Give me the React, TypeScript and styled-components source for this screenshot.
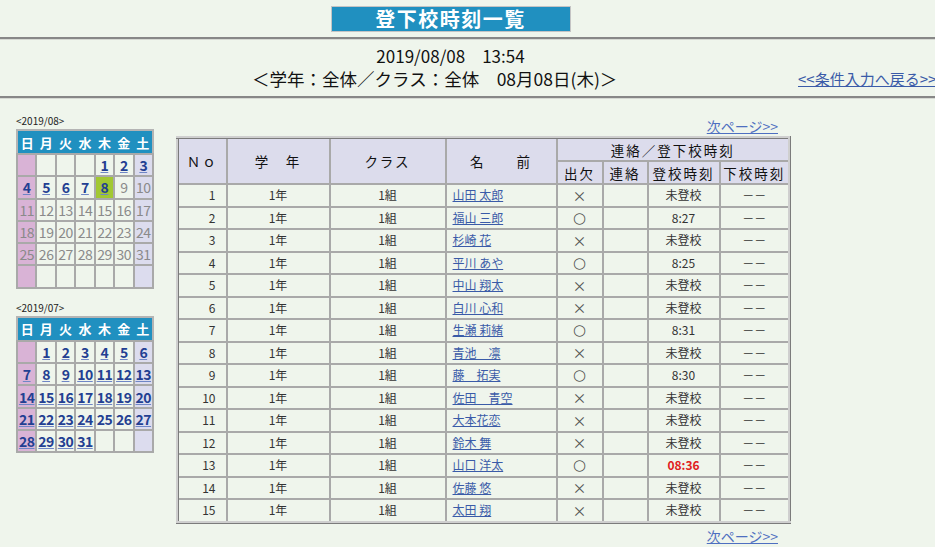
import React from 'react';
import styled, { createGlobalStyle } from 'styled-components';

const palette = {
  page: '#eff5ec',
  blue: '#2090c0',
  grid: '#a9a9a9',
  head: '#dcdcec',
  sun: '#d9b3d6',
  sat: '#dcdcee',
  today: '#a2c832',
  link: '#3a5ba8',
  calLink: '#233f92',
  off: '#8a8a8a',
  late: '#e02020',
};

const GlobalStyle = createGlobalStyle`
  html, body {
    margin: 0;
    padding: 0;
    overflow: hidden;
    background: ${palette.page};
  }
  body {
    font-family: "Noto Sans CJK JP", "DejaVu Sans", sans-serif;
    color: #222;
  }
`;

const Page = styled.div`
  width: 935px;
`;

const TitleRow = styled.div`
  width: 901px;
  display: flex;
  justify-content: center;
  padding-top: 6px;
`;

const TitleBox = styled.div`
  width: 238px;
  height: 24px;
  border: 1px solid #c4c4c4;
  background: ${palette.blue};
  color: #fff;
  font-size: 20px;
  font-weight: bold;
  line-height: 24px;
  letter-spacing: 1.5px;
  text-align: center;
`;

const Rule = styled.div<{ $top: number }>`
  margin-top: ${({ $top }) => $top}px;
  border-top: 2px solid #878787;
  border-bottom: 1px solid #d6d9d3;
`;

const DateLine = styled.div`
  width: 901px;
  padding-top: 6px;
  text-align: center;
  font-size: 17px;
  line-height: 20px;
  color: #111;
`;

const CondRow = styled.div`
  display: grid;
  grid-template-columns: 252px 546px auto;
  margin-top: 2px;
  line-height: 22px;
`;

const CondText = styled.div`
  grid-column: 2;
  font-size: 17.5px;
  color: #111;
  white-space: nowrap;
`;

const BackLink = styled.a`
  grid-column: 3;
  font-size: 15px;
  color: ${palette.link};
  text-decoration: underline;
  white-space: nowrap;
`;

const Content = styled.div`
  display: flex;
  align-items: flex-start;
  gap: 22px;
  padding-left: 16px;
`;

const Side = styled.div`
  width: 138px;
  padding-top: 16px;
`;

const CalLabel = styled.div<{ $gap: number }>`
  margin-top: ${({ $gap }) => $gap}px;
  margin-bottom: 2px;
  font-size: 10px;
  line-height: 12px;
  color: #222;
`;

const CalTable = styled.table`
  width: 138px;
  table-layout: fixed;
  border-collapse: collapse;
  border: 2px solid #b4b4b4;
`;

const CalHead = styled.th`
  height: 22px;
  padding: 0;
  background: ${palette.blue};
  color: #fff;
  font-size: 13px;
  font-weight: bold;
  text-align: center;
`;

const Day = styled.td<{ $col: number; $today?: boolean }>`
  height: 20.3px;
  padding: 0;
  border: 2px solid ${palette.grid};
  text-align: center;
  font-size: 14px;
  line-height: 18px;
  background: ${({ $col, $today }) =>
    $today ? palette.today : $col === 0 ? palette.sun : $col === 6 ? palette.sat : palette.page};
`;

const DayLink = styled.a<{ $plain?: boolean }>`
  color: ${palette.calLink};
  font-weight: bold;
  letter-spacing: -0.5px;
  text-decoration: ${({ $plain }) => ($plain ? 'none' : 'underline')};
  text-decoration-color: #6f86c6;
`;

const DayOff = styled.span`
  color: ${palette.off};
  letter-spacing: -0.5px;
`;

const Main = styled.div`
  width: 614px;
  padding-top: 15px;
`;

const PagerRow = styled.div`
  height: 22px;
  line-height: 22px;
  padding-right: 12px;
  text-align: right;
`;

const PagerLink = styled.a`
  font-size: 14px;
  color: #4e6fc0;
  text-decoration: underline;
`;

const DataTable = styled.table`
  width: 612px;
  table-layout: fixed;
  border-collapse: collapse;
  border: 3px ridge #cfcfcf;
`;

const HeadCell = styled.th`
  height: 21px;
  padding: 0;
  border: 2px solid ${palette.grid};
  background: ${palette.head};
  font-size: 13.5px;
  font-weight: normal;
  letter-spacing: 2px;
  color: #111;
  text-align: center;
  white-space: nowrap;
`;

const Cell = styled.td<{ $align?: 'left' | 'center' | 'right' }>`
  height: 20.5px;
  padding: 0 ${({ $align }) => ($align === 'right' ? '10px' : '6px')};
  border: 2px solid ${palette.grid};
  font-size: 12px;
  line-height: 18px;
  color: #333;
  text-align: ${({ $align = 'center' }) => $align};
  white-space: nowrap;
`;

const NameLink = styled.a`
  color: ${palette.link};
  text-decoration: underline;
`;

const Mark = styled.span<{ $ok?: boolean }>`
  color: #555;
  font-size: ${({ $ok }) => ($ok ? '15px' : '14px')};
  font-family: ${({ $ok }) => ($ok ? '"DejaVu Sans", sans-serif' : 'inherit')};
`;

const Time = styled.span<{ $late?: boolean }>`
  color: ${({ $late }) => ($late ? palette.late : '#333')};
  font-weight: ${({ $late }) => ($late ? 'bold' : 'normal')};
`;

type DayCell = { d?: number; kind?: 'link' | 'plain' | 'off' | 'today' };

const L = (d: number): DayCell => ({ d, kind: 'link' });
const O = (d: number): DayCell => ({ d, kind: 'off' });
const P = (d: number): DayCell => ({ d, kind: 'plain' });
const E: DayCell = {};

const august: DayCell[][] = [
  [E, E, E, E, L(1), L(2), L(3)],
  [L(4), L(5), L(6), L(7), { d: 8, kind: 'today' }, O(9), O(10)],
  [11, 12, 13, 14, 15, 16, 17].map(O),
  [18, 19, 20, 21, 22, 23, 24].map(O),
  [25, 26, 27, 28, 29, 30, 31].map(O),
  [E, E, E, E, E, E, E],
];

const july: DayCell[][] = [
  [E, L(1), L(2), L(3), L(4), L(5), L(6)],
  [7, 8, 9, 10, 11, 12, 13].map(L),
  [14, 15, 16, 17, 18, 19, 20].map(L),
  [L(21), L(22), L(23), L(24), P(25), P(26), L(27)],
  [L(28), L(29), L(30), L(31), E, E, E],
];

const weekdays = ['日', '月', '火', '水', '木', '金', '土'];

const Calendar: React.FC<{ label: string; weeks: DayCell[][]; gap: number }> = ({
  label,
  weeks,
  gap,
}) => (
  <>
    <CalLabel $gap={gap}>{label}</CalLabel>
    <CalTable>
      <thead>
        <tr>
          {weekdays.map((w) => (
            <CalHead key={w}>{w}</CalHead>
          ))}
        </tr>
      </thead>
      <tbody>
        {weeks.map((week, i) => (
          <tr key={i}>
            {week.map((c, j) => (
              <Day key={j} $col={j} $today={c.kind === 'today'}>
                {c.d === undefined ? null : c.kind === 'off' ? (
                  <DayOff>{c.d}</DayOff>
                ) : (
                  <DayLink href="#" $plain={c.kind === 'plain'}>
                    {c.d}
                  </DayLink>
                )}
              </Day>
            ))}
          </tr>
        ))}
      </tbody>
    </CalTable>
  </>
);

type Student = { name: string; present: boolean; time?: string; late?: boolean };

const students: Student[] = [
  { name: '山田 太郎', present: false },
  { name: '福山 三郎', present: true, time: '8:27' },
  { name: '杉崎 花', present: false },
  { name: '平川 あや', present: true, time: '8:25' },
  { name: '中山 翔太', present: false },
  { name: '白川 心和', present: false },
  { name: '生瀬 莉緒', present: true, time: '8:31' },
  { name: '青池　凛', present: false },
  { name: '藤　拓実', present: true, time: '8:30' },
  { name: '佐田　青空', present: false },
  { name: '大本花恋', present: false },
  { name: '鈴木 舞', present: false },
  { name: '山口 洋太', present: true, time: '08:36', late: true },
  { name: '佐藤 悠', present: false },
  { name: '太田 翔', present: false },
];

const colWidths = [49, 103, 116, 111, 46, 45, 72, 70];

const App: React.FC = () => (
  <Page>
    <GlobalStyle />
    <TitleRow>
      <TitleBox>登下校時刻一覧</TitleBox>
    </TitleRow>
    <Rule $top={5} />

    <DateLine>2019/08/08　13:54</DateLine>
    <CondRow>
      <CondText>＜学年：全体／クラス：全体　08月08日(木)＞</CondText>
      <BackLink href="#">&lt;&lt;条件入力へ戻る&gt;&gt;</BackLink>
    </CondRow>
    <Rule $top={6} />

    <Content>
      <Side>
        <Calendar label="<2019/08>" weeks={august} gap={0} />
        <Calendar label="<2019/07>" weeks={july} gap={13} />
      </Side>

      <Main>
        <PagerRow>
          <PagerLink href="#">次ページ&gt;&gt;</PagerLink>
        </PagerRow>
        <DataTable>
          <colgroup>
            {colWidths.map((w, i) => (
              <col key={i} style={{ width: w }} />
            ))}
          </colgroup>
          <thead>
            <tr>
              <HeadCell rowSpan={2}>Ｎｏ</HeadCell>
              <HeadCell rowSpan={2}>学　年</HeadCell>
              <HeadCell rowSpan={2}>クラス</HeadCell>
              <HeadCell rowSpan={2}>名　　前</HeadCell>
              <HeadCell colSpan={4}>連絡／登下校時刻</HeadCell>
            </tr>
            <tr>
              <HeadCell>出欠</HeadCell>
              <HeadCell>連絡</HeadCell>
              <HeadCell>登校時刻</HeadCell>
              <HeadCell>下校時刻</HeadCell>
            </tr>
          </thead>
          <tbody>
            {students.map((s, i) => (
              <tr key={s.name}>
                <Cell $align="right">{i + 1}</Cell>
                <Cell>1年</Cell>
                <Cell>1組</Cell>
                <Cell $align="left">
                  <NameLink href="#">{s.name}</NameLink>
                </Cell>
                <Cell>
                  <Mark $ok={s.present}>{s.present ? '○' : '×'}</Mark>
                </Cell>
                <Cell />
                <Cell>
                  <Time $late={s.late}>{s.time ?? '未登校'}</Time>
                </Cell>
                <Cell>－－</Cell>
              </tr>
            ))}
          </tbody>
        </DataTable>
        <PagerRow>
          <PagerLink href="#">次ページ&gt;&gt;</PagerLink>
        </PagerRow>
      </Main>
    </Content>
  </Page>
);

export default App;
